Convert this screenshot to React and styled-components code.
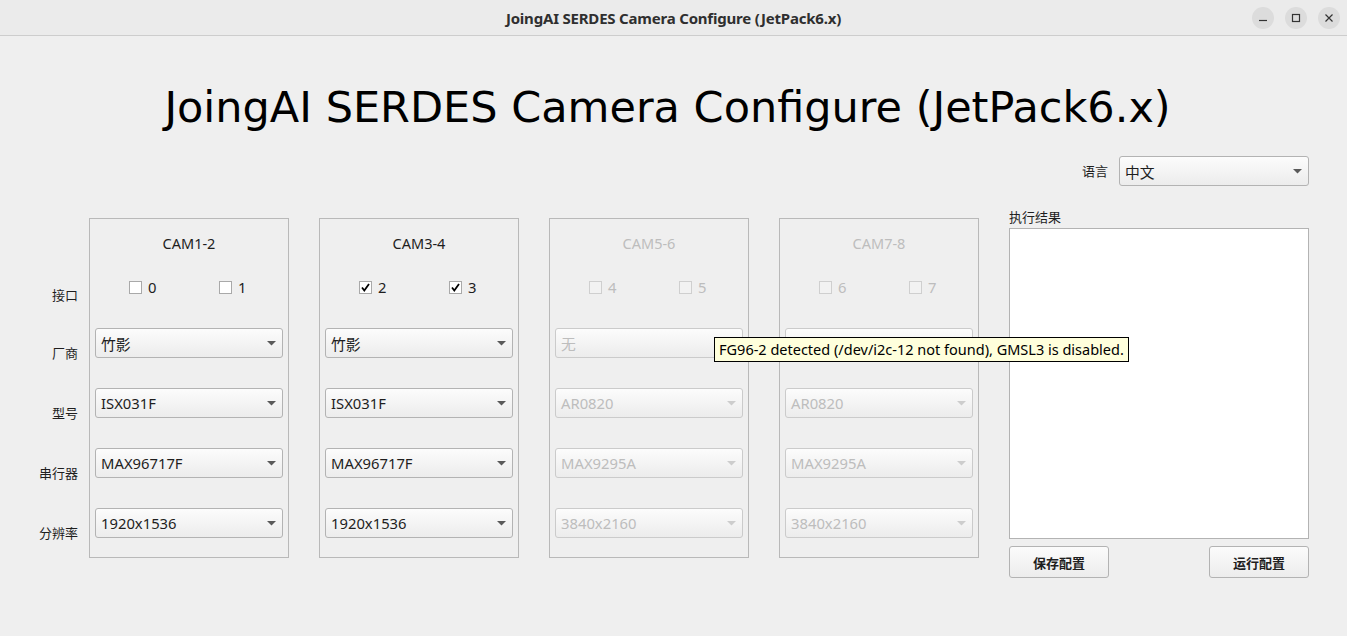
import React from 'react';
import styled, { createGlobalStyle } from 'styled-components';

const GlobalStyle = createGlobalStyle`
  html, body {
    margin: 0;
    padding: 0;
    background: #efefef;
  }
  * {
    box-sizing: border-box;
  }
`;

const Page = styled.div`
  position: relative;
  width: 1347px;
  height: 636px;
  overflow: hidden;
  background: #efefef;
  font-family: 'Noto Sans', 'Noto Sans CJK SC', sans-serif;
  font-size: 14.8px;
  color: #1e1e1e;
`;

const TitleBar = styled.div`
  height: 36px;
  background: #ebebeb;
  border-bottom: 1px solid #cdcdcd;
  display: flex;
  align-items: center;
  justify-content: center;
  position: relative;
`;

const WindowTitle = styled.div`
  font-weight: bold;
  font-size: 15px;
  color: #2f2f2f;
  letter-spacing: -0.2px;
`;

const WindowButtons = styled.div`
  position: absolute;
  right: 7px;
  top: 7px;
  display: flex;
  gap: 11px;
`;

const WinButton = styled.div`
  width: 22px;
  height: 22px;
  border-radius: 50%;
  background: #dcdcdc;
  display: flex;
  align-items: center;
  justify-content: center;
`;

const Heading = styled.h1`
  margin: 45px 0 0;
  padding-right: 12px;
  text-align: center;
  font-family: 'DejaVu Sans', sans-serif;
  font-weight: normal;
  font-size: 43px;
  line-height: 52px;
  color: #000;
`;

const LanguageRow = styled.div`
  margin-top: 24px;
  display: flex;
  justify-content: flex-end;
  align-items: center;
  gap: 11px;
  padding-right: 38px;
  height: 28px;
`;

const Content = styled.div`
  margin-top: 23px;
  display: flex;
  align-items: flex-start;
`;

const LabelColumn = styled.div`
  width: 78px;
  display: flex;
  flex-direction: column;
  align-items: flex-end;
  padding-top: 77px;
  margin-right: 11px;
`;

const RowLabel = styled.div`
  height: 20px;
  line-height: 20px;
  margin-bottom: ${({ $gap }) => $gap}px;
  font-size: 13px;
`;

const Groups = styled.div`
  display: flex;
  gap: 30px;
  margin-top: 10px;
`;

const Group = styled.div`
  width: 200px;
  height: 340px;
  border: 1px solid #b9b9b9;
  padding: 14px 5px 0;
  display: flex;
  flex-direction: column;
  color: ${({ $disabled }) => ($disabled ? '#bdbdbd' : '#1e1e1e')};
`;

const GroupTitle = styled.div`
  text-align: center;
  height: 20px;
  line-height: 20px;
  font-size: 14.5px;
`;

const CheckRow = styled.div`
  display: flex;
  margin-top: 24px;
  padding-left: 34px;
  height: 20px;
  align-items: center;
`;

const CheckItem = styled.div`
  width: 90px;
  flex-shrink: 0;
  display: flex;
  align-items: center;
  gap: 6px;
`;

const Box = styled.div`
  width: 13px;
  height: 13px;
  border: 1px solid ${({ $disabled }) => ($disabled ? '#cfcfcf' : '#a9a9a9')};
  background: ${({ $disabled }) => ($disabled ? '#f2f2f2' : '#ffffff')};
  display: flex;
  align-items: center;
  justify-content: center;
`;

const ComboStack = styled.div`
  margin-top: 31px;
  display: flex;
  flex-direction: column;
  gap: 30px;
`;

const Combo = styled.div`
  width: ${({ $width }) => $width || 188}px;
  height: 30px;
  border: 1px solid ${({ $disabled }) => ($disabled ? '#cbcbcb' : '#b3b3b3')};
  border-radius: 3px;
  background: linear-gradient(#fcfcfc, #ececec);
  display: flex;
  align-items: center;
  justify-content: space-between;
  padding: 0 6px 0 5px;
  color: ${({ $disabled }) => ($disabled ? '#bdbdbd' : '#1e1e1e')};
`;

const ResultPanel = styled.div`
  width: 300px;
  margin-left: 30px;
  display: flex;
  flex-direction: column;
`;

const ResultLabel = styled.div`
  height: 18px;
  line-height: 18px;
  font-size: 13px;
`;

const ResultBox = styled.div`
  margin-top: 2px;
  height: 311px;
  background: #ffffff;
  border: 1px solid #b3b3b3;
`;

const ButtonRow = styled.div`
  margin-top: 7px;
  display: flex;
  justify-content: space-between;
`;

const Button = styled.div`
  width: 100px;
  height: 32px;
  border: 1px solid #b3b3b3;
  border-radius: 3px;
  background: linear-gradient(#fbfbfb, #ececec);
  display: flex;
  align-items: center;
  justify-content: center;
  font-weight: bold;
  font-size: 13px;
`;

const Tooltip = styled.div`
  position: absolute;
  left: 714px;
  top: 337px;
  padding: 0 4px;
  height: 25px;
  line-height: 23px;
  font-size: 14.5px;
  background: #ffffdc;
  border: 1px solid #000;
  color: #000;
  white-space: nowrap;
`;

const Arrow = ({ disabled }) => (
  <svg width="9" height="5" viewBox="0 0 9 5">
    <path d="M0 0 L9 0 L4.5 4.5 Z" fill={disabled ? '#cdcdcd' : '#5a5a5a'} />
  </svg>
);

const Check = () => (
  <svg width="11" height="11" viewBox="0 0 11 11">
    <path d="M2 5.5 L4.3 8.5 L9 2" fill="none" stroke="#000" strokeWidth="1.8" />
  </svg>
);

const groups = [
  { title: 'CAM1-2', ports: ['0', '1'], checked: false, values: ['竹影', 'ISX031F', 'MAX96717F', '1920x1536'] },
  { title: 'CAM3-4', ports: ['2', '3'], checked: true, values: ['竹影', 'ISX031F', 'MAX96717F', '1920x1536'] },
  { title: 'CAM5-6', ports: ['4', '5'], disabled: true, values: ['无', 'AR0820', 'MAX9295A', '3840x2160'] },
  { title: 'CAM7-8', ports: ['6', '7'], disabled: true, values: ['', 'AR0820', 'MAX9295A', '3840x2160'] },
];

const rowLabels = [
  { text: '接口', gap: 38 },
  { text: '厂商', gap: 40 },
  { text: '型号', gap: 40 },
  { text: '串行器', gap: 40 },
  { text: '分辨率', gap: 0 },
];

export default function App() {
  return (
    <Page>
      <GlobalStyle />
      <TitleBar>
        <WindowTitle>JoingAI SERDES Camera Configure (JetPack6.x)</WindowTitle>
        <WindowButtons>
          <WinButton>
            <svg width="10" height="10" viewBox="0 0 10 10">
              <path d="M1 7.5 H9" stroke="#333" strokeWidth="1.2" />
            </svg>
          </WinButton>
          <WinButton>
            <svg width="10" height="10" viewBox="0 0 10 10">
              <rect x="1.5" y="1.5" width="7" height="7" fill="none" stroke="#333" strokeWidth="1.2" />
            </svg>
          </WinButton>
          <WinButton>
            <svg width="10" height="10" viewBox="0 0 10 10">
              <path d="M1.5 1.5 L8.5 8.5 M8.5 1.5 L1.5 8.5" stroke="#333" strokeWidth="1.2" />
            </svg>
          </WinButton>
        </WindowButtons>
      </TitleBar>

      <Heading>JoingAI SERDES Camera Configure (JetPack6.x)</Heading>

      <LanguageRow>
        <RowLabel $gap={0}>语言</RowLabel>
        <Combo $width={190}>
          <span>中文</span>
          <Arrow />
        </Combo>
      </LanguageRow>

      <Content>
        <LabelColumn>
          {rowLabels.map((l) => (
            <RowLabel key={l.text} $gap={l.gap}>{l.text}</RowLabel>
          ))}
        </LabelColumn>

        <Groups>
          {groups.map((g) => (
            <Group key={g.title} $disabled={g.disabled}>
              <GroupTitle>{g.title}</GroupTitle>
              <CheckRow>
                {g.ports.map((p) => (
                  <CheckItem key={p}>
                    <Box $disabled={g.disabled}>{g.checked && <Check />}</Box>
                    <span>{p}</span>
                  </CheckItem>
                ))}
              </CheckRow>
              <ComboStack>
                {g.values.map((v, i) => (
                  <Combo key={i} $disabled={g.disabled}>
                    <span>{v}</span>
                    <Arrow disabled={g.disabled} />
                  </Combo>
                ))}
              </ComboStack>
            </Group>
          ))}
        </Groups>

        <ResultPanel>
          <ResultLabel>执行结果</ResultLabel>
          <ResultBox />
          <ButtonRow>
            <Button>保存配置</Button>
            <Button>运行配置</Button>
          </ButtonRow>
        </ResultPanel>
      </Content>

      <Tooltip>FG96-2 detected (/dev/i2c-12 not found), GMSL3 is disabled.</Tooltip>
    </Page>
  );
}
